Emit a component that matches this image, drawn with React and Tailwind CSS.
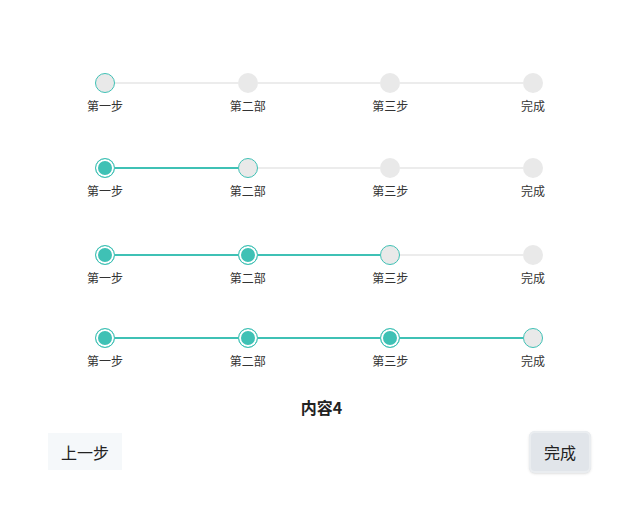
import React from 'react';

const labels = ['第一步', '第二部', '第三步', '完成'];

function Dot({ state }) {
  if (state === 'done') {
    return (
      <div className="w-5 h-5 rounded-full border border-[#3fc1b5] bg-[#3fc1b5] shadow-[inset_0_0_0_2px_#ffffff]" />
    );
  }
  if (state === 'active') {
    return <div className="w-5 h-5 rounded-full border border-[#3fc1b5] bg-[#e9e9e9]" />;
  }
  return <div className="w-5 h-5 rounded-full bg-[#e9e9e9]" />;
}

function Steps({ active, className }) {
  return (
    <div className={`flex items-start ${className}`}>
      {labels.map((label, i) => {
        const state = i < active ? 'done' : i === active ? 'active' : 'todo';
        return (
          <React.Fragment key={label}>
            <div className="flex flex-col items-center w-5 shrink-0">
              <Dot state={state} />
              <span className="mt-[5px] text-xs leading-4 whitespace-nowrap text-[#333]">{label}</span>
            </div>
            {i < labels.length - 1 && (
              <div
                className={`flex-1 h-0.5 mt-[9px] ${i < active ? 'bg-[#3fc1b5]' : 'bg-[#ececec]'}`}
              />
            )}
          </React.Fragment>
        );
      })}
    </div>
  );
}

export default function App() {
  return (
    <div
      className="w-[643px] h-[528px] bg-white"
      style={{ fontFamily: '"Noto Sans CJK SC", "Noto Sans", sans-serif' }}
    >
      <div className="pt-[73px] pl-[95px] w-[543px]">
        <Steps active={0} />
        <Steps active={1} className="mt-[44px]" />
        <Steps active={2} className="mt-[46px]" />
        <Steps active={3} className="mt-[42px]" />
      </div>

      <div className="mt-[26px] text-center text-base leading-6 font-bold text-[#222]">内容4</div>

      <div className="flex justify-between items-start pl-[48px] pr-[52px] mt-[12px]">
        <button className="mt-[2px] w-[74px] h-[37px] bg-[#f5f8fa] text-base text-[#222]">上一步</button>
        <button className="w-[62px] h-[42px] rounded-md bg-[#e1e5ea] ring-2 ring-inset ring-[#eaedf0] shadow-sm text-base text-[#222]">
          完成
        </button>
      </div>
    </div>
  );
}
